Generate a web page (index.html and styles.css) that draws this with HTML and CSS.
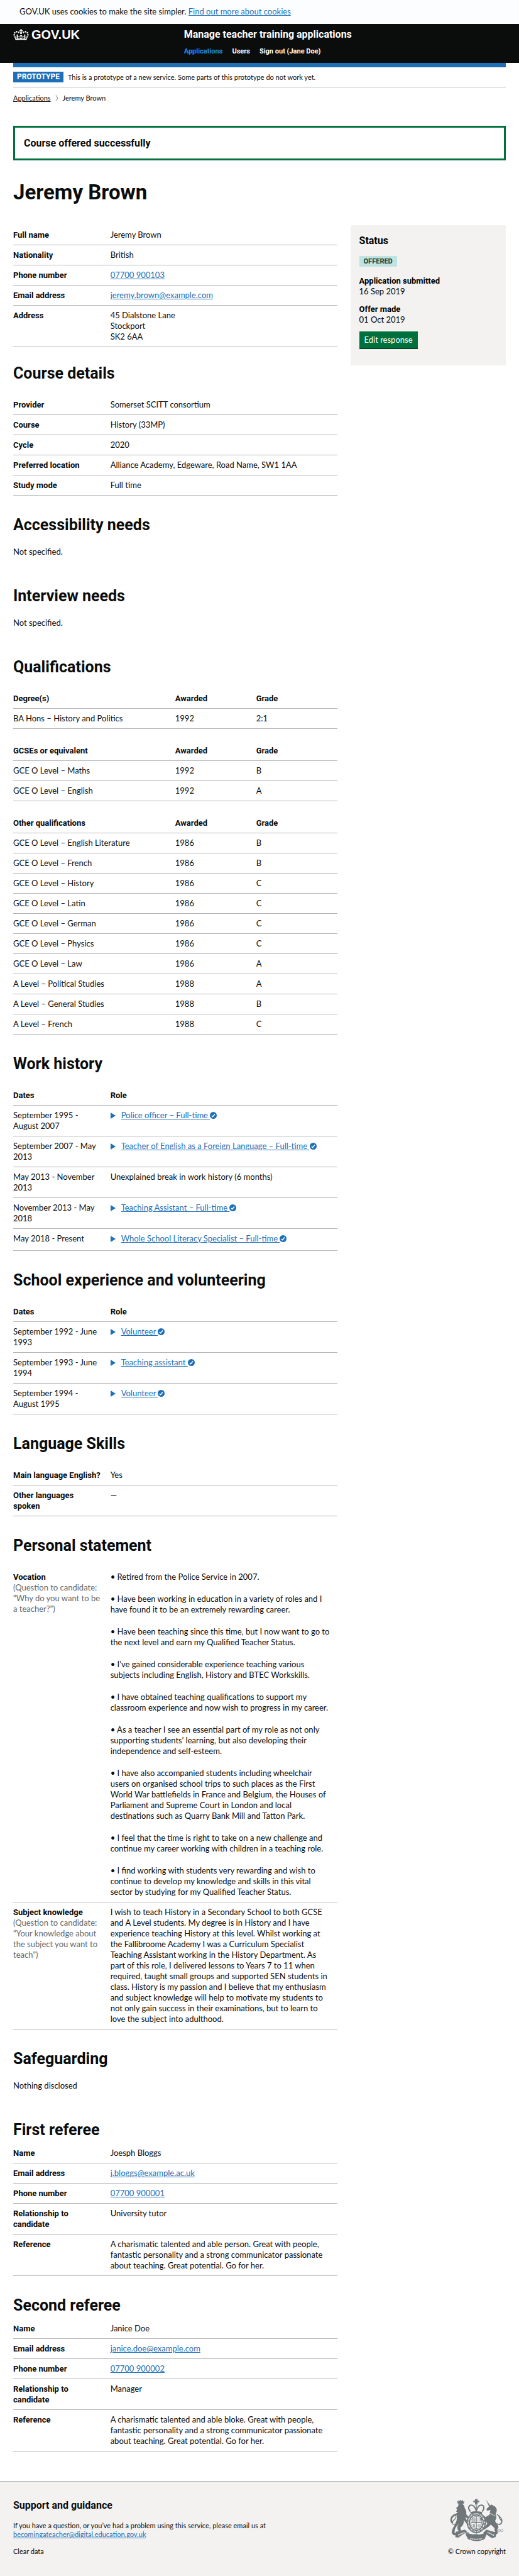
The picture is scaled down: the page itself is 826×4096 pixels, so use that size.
FILE: index.html
```html
<!DOCTYPE html>
<html lang="en">
<head>
<meta charset="utf-8">
<meta name="viewport" content="width=device-width, initial-scale=1">
<title>Jeremy Brown - Manage teacher training applications</title>
<link rel="stylesheet" href="styles.css">
</head>
<body>
<svg class="sprite" aria-hidden="true">
  <symbol id="tick" viewBox="0 0 16 16">
    <circle cx="8" cy="8" r="8" fill="#1d70b8"/>
    <path d="M4.2 8.6l2.5 2.5 5-6" fill="none" stroke="#fff" stroke-width="2.2"/>
  </symbol>
</svg>

<div class="cookie">
  <p>GOV.UK uses cookies to make the site simpler. <a class="link" href="#cookies">Find out more about cookies</a></p>
</div>

<header class="header">
  <div class="container header-grid">
    <a class="logo" href="#home">
      <svg class="crown" viewBox="0 0 132 97" aria-hidden="true"><path fill="currentColor" fill-rule="evenodd" d="M25 30.2c3.5 1.5 7.7-.2 9.1-3.7 1.5-3.6-.2-7.8-3.9-9.2-3.6-1.4-7.6.3-9.1 3.9-1.4 3.5.3 7.5 3.9 9zM9 39.5c3.6 1.5 7.8-.2 9.2-3.7 1.5-3.6-.2-7.8-3.9-9.1-3.6-1.5-7.6.2-9.1 3.8-1.4 3.5.3 7.5 3.8 9zM4.4 57.2c3.5 1.5 7.7-.2 9.1-3.8 1.5-3.6-.2-7.7-3.9-9.1-3.5-1.5-7.6.3-9.1 3.8-1.4 3.5.3 7.6 3.9 9.1zm38.3-21.4c3.5 1.5 7.7-.2 9.1-3.8 1.5-3.6-.2-7.7-3.9-9.1-3.6-1.5-7.6.3-9.1 3.8-1.3 3.6.4 7.7 3.9 9.1zm64.4-5.6c-3.6 1.5-7.8-.2-9.1-3.7-1.5-3.6.2-7.8 3.8-9.2 3.6-1.4 7.7.3 9.2 3.9 1.3 3.5-.4 7.5-3.9 9zm15.9 9.3c-3.6 1.5-7.7-.2-9.1-3.7-1.5-3.6.2-7.8 3.7-9.1 3.6-1.5 7.7.2 9.2 3.8 1.5 3.5-.3 7.5-3.8 9zm4.7 17.7c-3.6 1.5-7.8-.2-9.2-3.8-1.5-3.6.2-7.7 3.9-9.1 3.6-1.5 7.7.3 9.2 3.8 1.3 3.5-.4 7.6-3.9 9.1zM89.3 35.8c-3.6 1.5-7.8-.2-9.2-3.8-1.4-3.6.2-7.7 3.9-9.1 3.6-1.5 7.7.3 9.2 3.8 1.4 3.6-.3 7.7-3.9 9.1zM69.7 17.7l8.9 4.7V9.3l-8.9 2.8c-.2-.3-.5-.6-.9-.9L72.4 0H59.6l3.5 11.2c-.3.3-.6.5-.9.9l-8.8-2.8v13.1l8.8-4.7c.3.3.6.7.9.9l-5 15.4v.1c-.2.8-.4 1.6-.4 2.4 0 4.1 3.1 7.5 7 8.1h.2c.3 0 .7.1 1 .1.4 0 .7 0 1-.1h.2c4-.6 7.1-4.1 7.1-8.1 0-.8-.1-1.7-.4-2.4V34l-5.1-15.4c.4-.2.7-.6 1-.9zM66 92.8c16.9 0 32.8 1.1 47.1 3.2 4-16.9 8.9-26.7 14-33.5l-9.6-3.4c1 4.9 1.1 7.2 0 10.2-1.5-1.4-3-4.3-4.2-8.7L108.6 76c2.8-2 5-3.2 7.5-3.3-4.4 9.4-10 11.9-13.6 11.2-4.3-.8-6.3-4.6-5.6-7.9 1-4.7 5.7-5.9 8-.5 4.3-8.7-3-11.4-7.6-8.8 7.1-7.2 7.9-13.5 2.1-21.1-8 6.1-8.1 12.3-4.5 20.8-4.7-5.4-12.1-2.5-9.5 6.2 3.4-5.2 7.9-2 7.2 3.1-.6 4.3-6.4 7.8-13.5 7.2-10.3-.9-10.9-8-11.2-13.8 2.5-.5 7.1 1.8 11 7.3L80.2 60c-4.1 4.4-8 5.3-12.3 5.4 1.4-4.4 8-11.6 8-11.6H55.5s6.4 7.2 7.9 11.6c-4.2-.1-8-1-12.3-5.4l1.4 16.4c3.9-5.5 8.5-7.7 10.9-7.3-.3 5.8-.9 12.8-11.1 13.8-7.2.6-12.9-2.9-13.5-7.2-.7-5 3.8-8.3 7.1-3.1 2.7-8.7-4.6-11.6-9.4-6.2 3.7-8.5 3.6-14.7-4.6-20.8-5.8 7.6-5 13.9 2.2 21.1-4.7-2.6-11.9.1-7.7 8.8 2.3-5.5 7.1-4.2 8.1.5.7 3.3-1.3 7.1-5.7 7.9-3.5.7-9-1.8-13.5-11.2 2.5.1 4.7 1.3 7.5 3.3l-4.7-15.4c-1.2 4.4-2.7 7.2-4.3 8.7-1.1-3-.9-5.3 0-10.2l-9.5 3.4c5 6.9 9.9 16.7 14 33.5 14.8-2.1 30.8-3.2 47.7-3.2z"/></svg>
      <span>GOV.UK</span>
    </a>
    <div>
      <a class="service" href="#service">Manage teacher training applications</a>
      <nav class="nav" aria-label="Main">
        <a class="current" href="#applications">Applications</a>
        <a href="#users">Users</a>
        <a href="#sign-out">Sign out (Jane Doe)</a>
      </nav>
    </div>
  </div>
</header>

<div class="container">
  <div class="bar"></div>
  <div class="phase">
    <strong class="phase-tag">PROTOTYPE</strong>
    <span>This is a prototype of a new service. Some parts of this prototype do not work yet.</span>
  </div>
  <nav class="crumbs" aria-label="Breadcrumb">
    <a href="#applications">Applications</a>
    <svg class="chevron" viewBox="0 0 5 10" aria-hidden="true"><path d="M1 0.5L4 5 1 9.5" fill="none" stroke="#6f777b"/></svg>
    <span>Jeremy Brown</span>
  </nav>

  <div class="success" role="status">Course offered successfully</div>
  <h1>Jeremy Brown</h1>

  <div class="columns">
    <main>
      <dl class="rows">
        <div><dt>Full name</dt><dd>Jeremy Brown</dd></div>
        <div><dt>Nationality</dt><dd>British</dd></div>
        <div><dt>Phone number</dt><dd><a class="link" href="tel:07700900103">07700 900103</a></dd></div>
        <div><dt>Email address</dt><dd><a class="link" href="mailto:jeremy.brown@example.com">jeremy.brown@example.com</a></dd></div>
        <div><dt>Address</dt><dd>45 Dialstone Lane<br>Stockport<br>SK2 6AA</dd></div>
      </dl>

      <section class="close">
        <h2>Course details</h2>
        <dl class="rows">
          <div><dt>Provider</dt><dd>Somerset SCITT consortium</dd></div>
          <div><dt>Course</dt><dd>History (33MP)</dd></div>
          <div><dt>Cycle</dt><dd>2020</dd></div>
          <div><dt>Preferred location</dt><dd>Alliance Academy, Edgeware, Road Name, SW1 1AA</dd></div>
          <div><dt>Study mode</dt><dd>Full time</dd></div>
        </dl>
      </section>

      <section>
        <h2>Accessibility needs</h2>
        <p class="note">Not specified.</p>
      </section>

      <section>
        <h2>Interview needs</h2>
        <p class="note">Not specified.</p>
      </section>

      <section>
        <h2>Qualifications</h2>
        <table class="grades">
          <thead><tr><th scope="col">Degree(s)</th><th scope="col">Awarded</th><th scope="col">Grade</th></tr></thead>
          <tbody>
            <tr><td>BA Hons – History and Politics</td><td>1992</td><td>2:1</td></tr>
          </tbody>
        </table>
        <table class="grades">
          <thead><tr><th scope="col">GCSEs or equivalent</th><th scope="col">Awarded</th><th scope="col">Grade</th></tr></thead>
          <tbody>
            <tr><td>GCE O Level – Maths</td><td>1992</td><td>B</td></tr>
            <tr><td>GCE O Level – English</td><td>1992</td><td>A</td></tr>
          </tbody>
        </table>
        <table class="grades">
          <thead><tr><th scope="col">Other qualifications</th><th scope="col">Awarded</th><th scope="col">Grade</th></tr></thead>
          <tbody>
            <tr><td>GCE O Level – English Literature</td><td>1986</td><td>B</td></tr>
            <tr><td>GCE O Level – French</td><td>1986</td><td>B</td></tr>
            <tr><td>GCE O Level – History</td><td>1986</td><td>C</td></tr>
            <tr><td>GCE O Level – Latin</td><td>1986</td><td>C</td></tr>
            <tr><td>GCE O Level – German</td><td>1986</td><td>C</td></tr>
            <tr><td>GCE O Level – Physics</td><td>1986</td><td>C</td></tr>
            <tr><td>GCE O Level – Law</td><td>1986</td><td>A</td></tr>
            <tr><td>A Level – Political Studies</td><td>1988</td><td>A</td></tr>
            <tr><td>A Level – General Studies</td><td>1988</td><td>B</td></tr>
            <tr><td>A Level – French</td><td>1988</td><td>C</td></tr>
          </tbody>
        </table>
      </section>

      <section>
        <h2>Work history</h2>
        <table class="history">
          <thead><tr><th scope="col">Dates</th><th scope="col">Role</th></tr></thead>
          <tbody>
            <tr><td>September 1995 -<br>August 2007</td><td><details><summary><span>Police officer – Full-time&nbsp;</span><svg class="tick" aria-hidden="true"><use href="#tick"/></svg></summary></details></td></tr>
            <tr><td>September 2007 - May<br>2013</td><td><details><summary><span>Teacher of English as a Foreign Language – Full-time&nbsp;</span><svg class="tick" aria-hidden="true"><use href="#tick"/></svg></summary></details></td></tr>
            <tr><td>May 2013 - November<br>2013</td><td>Unexplained break in work history (6 months)</td></tr>
            <tr><td>November 2013 - May<br>2018</td><td><details><summary><span>Teaching Assistant – Full-time&nbsp;</span><svg class="tick" aria-hidden="true"><use href="#tick"/></svg></summary></details></td></tr>
            <tr><td>May 2018 - Present</td><td><details><summary><span>Whole School Literacy Specialist – Full-time&nbsp;</span><svg class="tick" aria-hidden="true"><use href="#tick"/></svg></summary></details></td></tr>
          </tbody>
        </table>
      </section>

      <section>
        <h2>School experience and volunteering</h2>
        <table class="history">
          <thead><tr><th scope="col">Dates</th><th scope="col">Role</th></tr></thead>
          <tbody>
            <tr><td>September 1992 - June<br>1993</td><td><details><summary><span>Volunteer&nbsp;</span><svg class="tick" aria-hidden="true"><use href="#tick"/></svg></summary></details></td></tr>
            <tr><td>September 1993 - June<br>1994</td><td><details><summary><span>Teaching assistant&nbsp;</span><svg class="tick" aria-hidden="true"><use href="#tick"/></svg></summary></details></td></tr>
            <tr><td>September 1994 -<br>August 1995</td><td><details><summary><span>Volunteer&nbsp;</span><svg class="tick" aria-hidden="true"><use href="#tick"/></svg></summary></details></td></tr>
          </tbody>
        </table>
      </section>

      <section>
        <h2>Language Skills</h2>
        <dl class="rows">
          <div><dt>Main language English?</dt><dd>Yes</dd></div>
          <div><dt>Other languages<br>spoken</dt><dd>—</dd></div>
        </dl>
      </section>

      <section>
        <h2>Personal statement</h2>
        <dl class="rows">
          <div>
            <dt>Vocation<br><span class="hint">(Question to candidate:<br>“Why do you want to be<br>a teacher?”)</span></dt>
            <dd class="statement">
              <p>• Retired from the Police Service in 2007.</p>
              <p>• Have been working in education in a variety of roles and I<br>have found it to be an extremely rewarding career.</p>
              <p>• Have been teaching since this time, but I now want to go to<br>the next level and earn my Qualified Teacher Status.</p>
              <p>• I’ve gained considerable experience teaching various<br>subjects including English, History and BTEC Workskills.</p>
              <p>• I have obtained teaching qualifications to support my<br>classroom experience and now wish to progress in my career.</p>
              <p>• As a teacher I see an essential part of my role as not only<br>supporting students’ learning, but also developing their<br>independence and self-esteem.</p>
              <p>• I have also accompanied students including wheelchair<br>users on organised school trips to such places as the First<br>World War battlefields in France and Belgium, the Houses of<br>Parliament and Supreme Court in London and local<br>destinations such as Quarry Bank Mill and Tatton Park.</p>
              <p>• I feel that the time is right to take on a new challenge and<br>continue my career working with children in a teaching role.</p>
              <p>• I find working with students very rewarding and wish to<br>continue to develop my knowledge and skills in this vital<br>sector by studying for my Qualified Teacher Status.</p>
            </dd>
          </div>
          <div>
            <dt>Subject knowledge<br><span class="hint">(Question to candidate:<br>“Your knowledge about<br>the subject you want to<br>teach”)</span></dt>
            <dd>I wish to teach History in a Secondary School to both GCSE<br>and A Level students. My degree is in History and I have<br>experience teaching History at this level. Whilst working at<br>the Fallibroome Academy I was a Curriculum Specialist<br>Teaching Assistant working in the History Department. As<br>part of this role, I delivered lessons to Years 7 to 11 when<br>required, taught small groups and supported SEN students in<br>class. History is my passion and I believe that my enthusiasm<br>and subject knowledge will help to motivate my students to<br>not only gain success in their examinations, but to learn to<br>love the subject into adulthood.</dd>
          </div>
        </dl>
      </section>

      <section>
        <h2>Safeguarding</h2>
        <p class="note">Nothing disclosed</p>
      </section>

      <section class="referee">
        <h2>First referee</h2>
        <dl class="rows">
          <div><dt>Name</dt><dd>Joesph Bloggs</dd></div>
          <div><dt>Email address</dt><dd><a class="link" href="mailto:j.bloggs@example.ac.uk">j.bloggs@example.ac.uk</a></dd></div>
          <div><dt>Phone number</dt><dd><a class="link" href="tel:07700900001">07700 900001</a></dd></div>
          <div><dt>Relationship to<br>candidate</dt><dd>University tutor</dd></div>
          <div><dt>Reference</dt><dd>A charismatic talented and able person. Great with people,<br>fantastic personality and a strong communicator passionate<br>about teaching. Great potential. Go for her.</dd></div>
        </dl>
      </section>

      <section class="referee">
        <h2>Second referee</h2>
        <dl class="rows">
          <div><dt>Name</dt><dd>Janice Doe</dd></div>
          <div><dt>Email address</dt><dd><a class="link" href="mailto:janice.doe@example.com">janice.doe@example.com</a></dd></div>
          <div><dt>Phone number</dt><dd><a class="link" href="tel:07700900002">07700 900002</a></dd></div>
          <div><dt>Relationship to<br>candidate</dt><dd>Manager</dd></div>
          <div><dt>Reference</dt><dd>A charismatic talented and able bloke. Great with people,<br>fantastic personality and a strong communicator passionate<br>about teaching. Great potential. Go for her.</dd></div>
        </dl>
      </section>
    </main>

    <aside class="status">
      <h3>Status</h3>
      <strong class="status-tag">OFFERED</strong>
      <dl>
        <dt>Application submitted</dt><dd>16 Sep 2019</dd>
        <dt>Offer made</dt><dd>01 Oct 2019</dd>
      </dl>
      <button class="button" type="button">Edit response</button>
    </aside>
  </div>
</div>

<footer class="footer">
  <div class="container footer-grid">
    <div>
      <h3>Support and guidance</h3>
      <p>If you have a question, or you’ve had a problem using this service, please email us at<br><a class="link" href="mailto:becomingateacher@digital.education.gov.uk">becomingateacher@digital.education.gov.uk</a></p>
      <a class="plain" href="#clear">Clear data</a>
    </div>
    <div class="copyright">
      <svg class="crest" viewBox="0 0 129 105" aria-hidden="true">
        <g fill="#6f777b">
          <!-- lion -->
          <path d="M19 12l-2-7 3 2 1-4 3 3 2-4 2 4 3-3 1 4 3-1-3 7z"/>
          <path d="M20 14c5-3 11-2 14 3l2 7c3 4 4 8 3 13l8 9-2 3-8-5 5 12-2 4-7-9c1 8-2 14-8 18l2 9 4 5-6 1-6-10c-3-6 0-10 3-14-4 3-8 8-10 13l-1 8 5 3 2 4-9-1c-6-3-5-9-2-16 3-7 7-12 9-19 1-7 0-13 2-20l-3-1 2-5-2-4 5-4z"/>
          <!-- unicorn -->
          <path d="M86 2l11 16-3 2z"/>
          <path d="M96 16l4-2 3 3c6 1 9 6 9 12l-3 8c3 5 2 11-1 16 2 6 7 9 8 15l-3 7 1 8-6 4-3-4 3-4-1-8-9-9c-6 6-12 10-19 13l-8 6-4-3 9-6c6-4 12-8 13-13l-6-10-9 3-2-5 7-1-4-5-8 1-1-5 8-2 11 9 9-5 3-12-8 2-2-4 7-7z"/>
          <!-- supporters' scroll ends -->
          <path d="M14 79l22-5 6 6-9 4-13 9-7-1zM87 74l24 7-2 11-9 2-13-9-7-4z"/>
          <path d="M37 84l8-5-1 4c12 4 27 4 37 0l-1-4 8 5-5 12c-11 7-27 7-40 0z"/>
          <!-- crown -->
          <path d="M60 1h6v4h4v4h-4v5h-6V9h-4V5h4z"/>
        </g>
        <g fill="none" stroke="#6f777b">
          <path stroke-width="4" d="M7 58C1 54 1 45 11 39l8-3"/>
          <path stroke-width="2" d="M14 39c5 8-10 14-9 19 1 6 12 3 13-4M117 62c8-4 10-9 4-17l-9-8M118 40c-5 8 11 12 5 19-4 4-8 4-11 0"/>
          <path stroke-width="3" d="M49 31C41 22 46 13 54 16c5 2 7 6 9 14 2-8 4-12 9-14 8-3 13 6 5 15"/>
          <path stroke-width="2" d="M63 14v16"/>
          <path stroke-width="4" d="M49 34q14-4 28 0"/>
          <ellipse cx="63" cy="57" rx="19" ry="21" stroke-width="8"/>
          <ellipse cx="63" cy="57" rx="13" ry="15" stroke-width="1"/>
          <path stroke-width="2" d="M50 57h26M63 42v30"/>
          <path stroke-width="1" d="M53 48h8M54 51h7M53 54h8M67 46v9M70 46v9M73 49v5M54 60l6 8M59 60v9M56 60v8M66 61h8M66 64h7M66 67h5M54 45v10M58 44v11"/>
          <path stroke-width="1.5" d="M63 79v14M57 88q1-6 6-1 5-5 6 1M59 91h8"/>
          <circle cx="108" cy="74" r="2.5"/><circle cx="113" cy="79" r="2.5"/><circle cx="118" cy="76" r="2.5"/><circle cx="124" cy="76" r="3"/>
        </g>
        <path d="M94 34l14 7" stroke="#f3f2f1" stroke-width="2" stroke-dasharray="2 1"/>
        <ellipse cx="63" cy="57" rx="19" ry="21" fill="none" stroke="#f3f2f1" stroke-width="3" stroke-dasharray="2 2 1 1 2 1"/>
        <g stroke="#f3f2f1" stroke-width="3" stroke-dasharray="2 1 1 1" fill="none">
          <path d="M20 87l15-7M90 80l16 8M49 95q14 4 28 0"/>
        </g>
      </svg>
      <span>© Crown copyright</span>
    </div>
  </div>
</footer>
</body>
</html>
```
FILE: styles.css
```css
* { box-sizing: border-box; }

body {
  margin: 0;
  background: #fff;
  color: #0b0c0c;
  font-family: Lato, "Liberation Sans", Arial, sans-serif;
  font-size: 13px;
  line-height: 17px;
}

h1, h2, h3, p, dl, dd { margin: 0; }

h1, h2, h3, th, dt, strong, .success, .header {
  font-family: Roboto, "Liberation Sans", Arial, sans-serif;
}

.sprite { display: none; }
.container { margin: 0 21px; }
.link { color: #1d70b8; text-decoration: underline; }

.cookie { padding: 10px 31px 11px; background: #fcfdfe; }

/* Header */
.header { background: #0b0c0c; color: #fff; }
.header a { color: inherit; text-decoration: none; font-weight: 700; }
.header-grid {
  display: grid;
  grid-template-columns: 35fr 66fr;
  padding: 6px 0 10px;
}
.header .logo {
  display: flex;
  gap: 4px;
  align-items: center;
  align-self: start;
  font: 700 20px/22px "Liberation Sans", Arial, sans-serif;
}
.crown { width: 25px; height: 18px; }
.service { display: block; font-size: 16px; line-height: 22px; }
.nav {
  display: flex;
  gap: 15px;
  margin-top: 8px;
  font-size: 11px;
  line-height: 16px;
}
.header .current { color: #1d8feb; }

.bar { height: 7px; background: #1d70b8; }
.phase {
  display: flex;
  gap: 7px;
  align-items: center;
  padding: 7px 0;
  border-bottom: 1px solid #b1b4b6;
  font-size: 11px;
}
.phase-tag { padding: 0 6px; background: #1d70b8; color: #fff; font-size: 12px; }
.crumbs {
  display: flex;
  gap: 7px;
  align-items: center;
  margin-top: 9px;
  font-size: 11px;
  line-height: 15px;
}
.crumbs a { color: inherit; }
.chevron { width: 5px; height: 10px; }

.success {
  margin-top: 37px;
  padding: 14px;
  border: 3px solid #00703c;
  font-size: 16px;
  line-height: 21px;
  font-weight: 700;
}

h1 { margin: 34px 0 35px; font-size: 33px; line-height: 34px; }
h2 { margin-bottom: 21px; font-size: 25px; line-height: 26px; }
h3 { font-size: 16px; line-height: 22px; }

.columns {
  display: grid;
  grid-template-columns: 25fr 12fr;
  gap: 21px;
  align-items: start;
}

section { margin-top: 34px; }
.close { margin-top: 29px; }
.referee h2 { margin-bottom: 8px; }
.note { padding-bottom: 15px; }

/* Label and value rows */
.rows > div {
  display: grid;
  grid-template-columns: 3fr 7fr;
  padding: 7px 0;
  border-bottom: 1px solid #b1b4b6;
  white-space: nowrap;
}
dt { font-weight: 700; }
.hint {
  color: #626a6e;
  font-family: Lato, "Liberation Sans", Arial, sans-serif;
  font-weight: 400;
}
.statement p + p { margin-top: 18px; }

/* Tables */
table { width: 100%; table-layout: fixed; border-spacing: 0; }
.grades + .grades { margin-top: 19px; }
th, td {
  padding: 7px 0;
  border-bottom: 1px solid #b1b4b6;
  text-align: left;
  vertical-align: top;
  white-space: nowrap;
}
.grades th:first-child { width: 50%; }
.history th:first-child { width: 30%; }

details { margin-bottom: 3px; }
summary {
  display: flex;
  align-items: center;
  color: #1d70b8;
  list-style: none;
  cursor: pointer;
}
summary::-webkit-details-marker { display: none; }
summary::before {
  content: "";
  margin-right: 9px;
  border: 5px solid transparent;
  border-right: 0;
  border-left: 8px solid #1d70b8;
}
summary span { text-decoration: underline; }
.tick { width: 11px; height: 11px; }

/* Status panel */
.status { padding: 14px 14px 26px; background: #f3f2f1; color: #000; }
.status-tag {
  display: table;
  margin: 13px 0 14px;
  padding: 0 7px;
  background: #bfe3e0;
  color: #10403c;
  font-size: 11px;
}
.status dd + dt { margin-top: 11px; }
.button {
  display: block;
  margin-top: 10px;
  padding: 5px 8px;
  border: 0;
  border-bottom: 1px solid #002d18;
  background: #00703c;
  color: #fff;
  font: inherit;
}

/* Footer */
.footer {
  margin-top: 47px;
  padding: 27px 0 35px;
  border-top: 1px solid #b1b4b6;
  background: #f3f2f1;
  font-size: 11px;
  line-height: 14px;
}
.footer-grid { display: flex; justify-content: space-between; align-items: flex-end; }
.footer h3 { margin-bottom: 14px; }
.footer p { margin-bottom: 13px; }
.plain { display: block; color: inherit; text-decoration: none; }
.copyright { display: flex; flex-direction: column; align-items: center; gap: 7px; }
.crest { width: 86px; height: 70px; }
```
